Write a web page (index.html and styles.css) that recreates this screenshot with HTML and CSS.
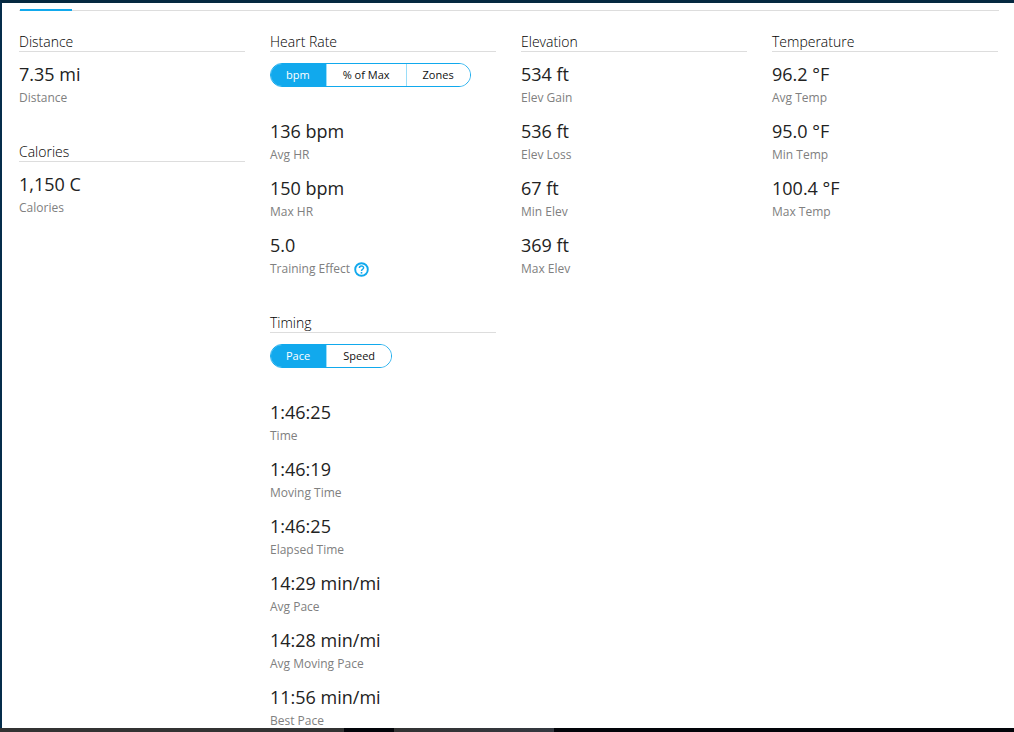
FILE: index.html
```html
<!DOCTYPE html>
<html lang="en">
<head>
    <meta charset="UTF-8">
    <meta name="viewport" content="width=device-width, initial-scale=1.0">
    <title>Activity Stats</title>
    <link rel="stylesheet" href="styles.css">
</head>
<body>
    <main class="panel">
        <div class="tab-line"><div class="tab-active"></div></div>

        <div class="columns">
            <div class="column">
                <section>
                    <h2>Distance</h2>
                    <div class="stat"><div class="value">7.35 mi</div><div class="label">Distance</div></div>
                </section>
                <section>
                    <h2>Calories</h2>
                    <div class="stat"><div class="value">1,150 C</div><div class="label">Calories</div></div>
                </section>
            </div>

            <div class="column">
                <section>
                    <h2>Heart Rate</h2>
                    <div class="toggle">
                        <button type="button" class="active">bpm</button>
                        <button type="button">% of Max</button>
                        <button type="button">Zones</button>
                    </div>
                    <div class="stat"><div class="value">136 bpm</div><div class="label">Avg HR</div></div>
                    <div class="stat"><div class="value">150 bpm</div><div class="label">Max HR</div></div>
                    <div class="stat">
                        <div class="value">5.0</div>
                        <div class="label">Training Effect
                            <button type="button" class="help" aria-label="Help">
                                <svg width="15" height="15" viewBox="0 0 15 15" fill="none" stroke="#11a9ed">
                                    <circle cx="7.5" cy="7.5" r="6.3" stroke-width="1.9"/>
                                    <path d="M5.4 6.1C5.4 3.4 9.6 3.5 9.6 5.8C9.6 7.3 7.5 7.2 7.5 9" stroke-width="1.5"/>
                                    <path d="M7.5 10v1.6" stroke-width="1.6"/>
                                </svg>
                            </button>
                        </div>
                    </div>
                </section>
                <section>
                    <h2>Timing</h2>
                    <div class="toggle">
                        <button type="button" class="active">Pace</button>
                        <button type="button">Speed</button>
                    </div>
                    <div class="stat"><div class="value">1:46:25</div><div class="label">Time</div></div>
                    <div class="stat"><div class="value">1:46:19</div><div class="label">Moving Time</div></div>
                    <div class="stat"><div class="value">1:46:25</div><div class="label">Elapsed Time</div></div>
                    <div class="stat"><div class="value">14:29 min/mi</div><div class="label">Avg Pace</div></div>
                    <div class="stat"><div class="value">14:28 min/mi</div><div class="label">Avg Moving Pace</div></div>
                    <div class="stat"><div class="value">11:56 min/mi</div><div class="label">Best Pace</div></div>
                </section>
            </div>

            <div class="column">
                <section>
                    <h2>Elevation</h2>
                    <div class="stat"><div class="value">534 ft</div><div class="label">Elev Gain</div></div>
                    <div class="stat"><div class="value">536 ft</div><div class="label">Elev Loss</div></div>
                    <div class="stat"><div class="value">67 ft</div><div class="label">Min Elev</div></div>
                    <div class="stat"><div class="value">369 ft</div><div class="label">Max Elev</div></div>
                </section>
            </div>

            <div class="column">
                <section>
                    <h2>Temperature</h2>
                    <div class="stat"><div class="value">96.2 °F</div><div class="label">Avg Temp</div></div>
                    <div class="stat"><div class="value">95.0 °F</div><div class="label">Min Temp</div></div>
                    <div class="stat"><div class="value">100.4 °F</div><div class="label">Max Temp</div></div>
                </section>
            </div>
        </div>
    </main>

    <footer class="taskbar">
        <div class="task task-search"></div>
        <div class="task task-window"></div>
    </footer>
</body>
</html>
```

FILE: styles.css
```css
* {
    box-sizing: border-box;
}
body {
    margin: 0;
    height: 100vh;
    display: flex;
    flex-direction: column;
    overflow: hidden;
    font-family: "Open Sans", "Noto Sans", sans-serif;
    color: #222;
    background: #fff;
}
.panel {
    flex: 1;
    min-height: 0;
    overflow: hidden;
    padding: 6px 16px 0 17px;
    border-top: 3px solid #052940;
    border-left: 2px solid #052d4b;
}

/* tab underline */
.tab-line {
    height: 2px;
    margin-right: -1px;
    background: linear-gradient(#fff 50%, #ddd 50%);
}
.tab-active {
    width: 52px;
    height: 2px;
    margin-left: 1px;
    background: #11a9ed;
}

/* stats */
.columns {
    display: grid;
    grid-template-columns: repeat(4, 1fr);
    gap: 25px;
    padding-top: 20px;
}
section {
    margin-bottom: 35px;
}
h2 {
    margin: 0 0 11px;
    padding-top: 2px;
    font-size: 14px;
    font-weight: 300;
    line-height: 18px;
    color: #000;
    border-bottom: 1px solid #ddd;
}
.stat {
    margin-bottom: 14px;
}
.stat:last-child {
    margin-bottom: 0;
}
.value {
    font-size: 18px;
    line-height: 22px;
    margin-bottom: 5px;
}
.label {
    display: flex;
    align-items: center;
    gap: 4px;
    font-size: 12px;
    line-height: 16px;
    color: #808080;
}
.help {
    display: flex;
    padding: 0;
    border: none;
    background: none;
    cursor: pointer;
}

/* toggle buttons */
.toggle {
    display: inline-flex;
    height: 24px;
    margin-bottom: 33px;
    border: 1px solid #11a9ed;
    border-radius: 12px;
    overflow: hidden;
    vertical-align: top;
}
.toggle button {
    padding: 0 16px;
    border: none;
    border-left: 1px solid #9addf8;
    background: #fff;
    color: #111;
    font-family: inherit;
    font-size: 11px;
    line-height: 22px;
    cursor: pointer;
}
.toggle .active {
    padding-left: 15px;
    border-left: none;
    background: #11a9ed;
    color: #fff;
}

/* strip along the bottom */
.taskbar {
    display: flex;
    gap: 50px;
    height: 4px;
    background: #020409;
}
.task {
    background: #333;
}
.task-search {
    width: 344px;
}
.task-window {
    width: 160px;
    background: linear-gradient(90deg, #333, #343840);
}
```
